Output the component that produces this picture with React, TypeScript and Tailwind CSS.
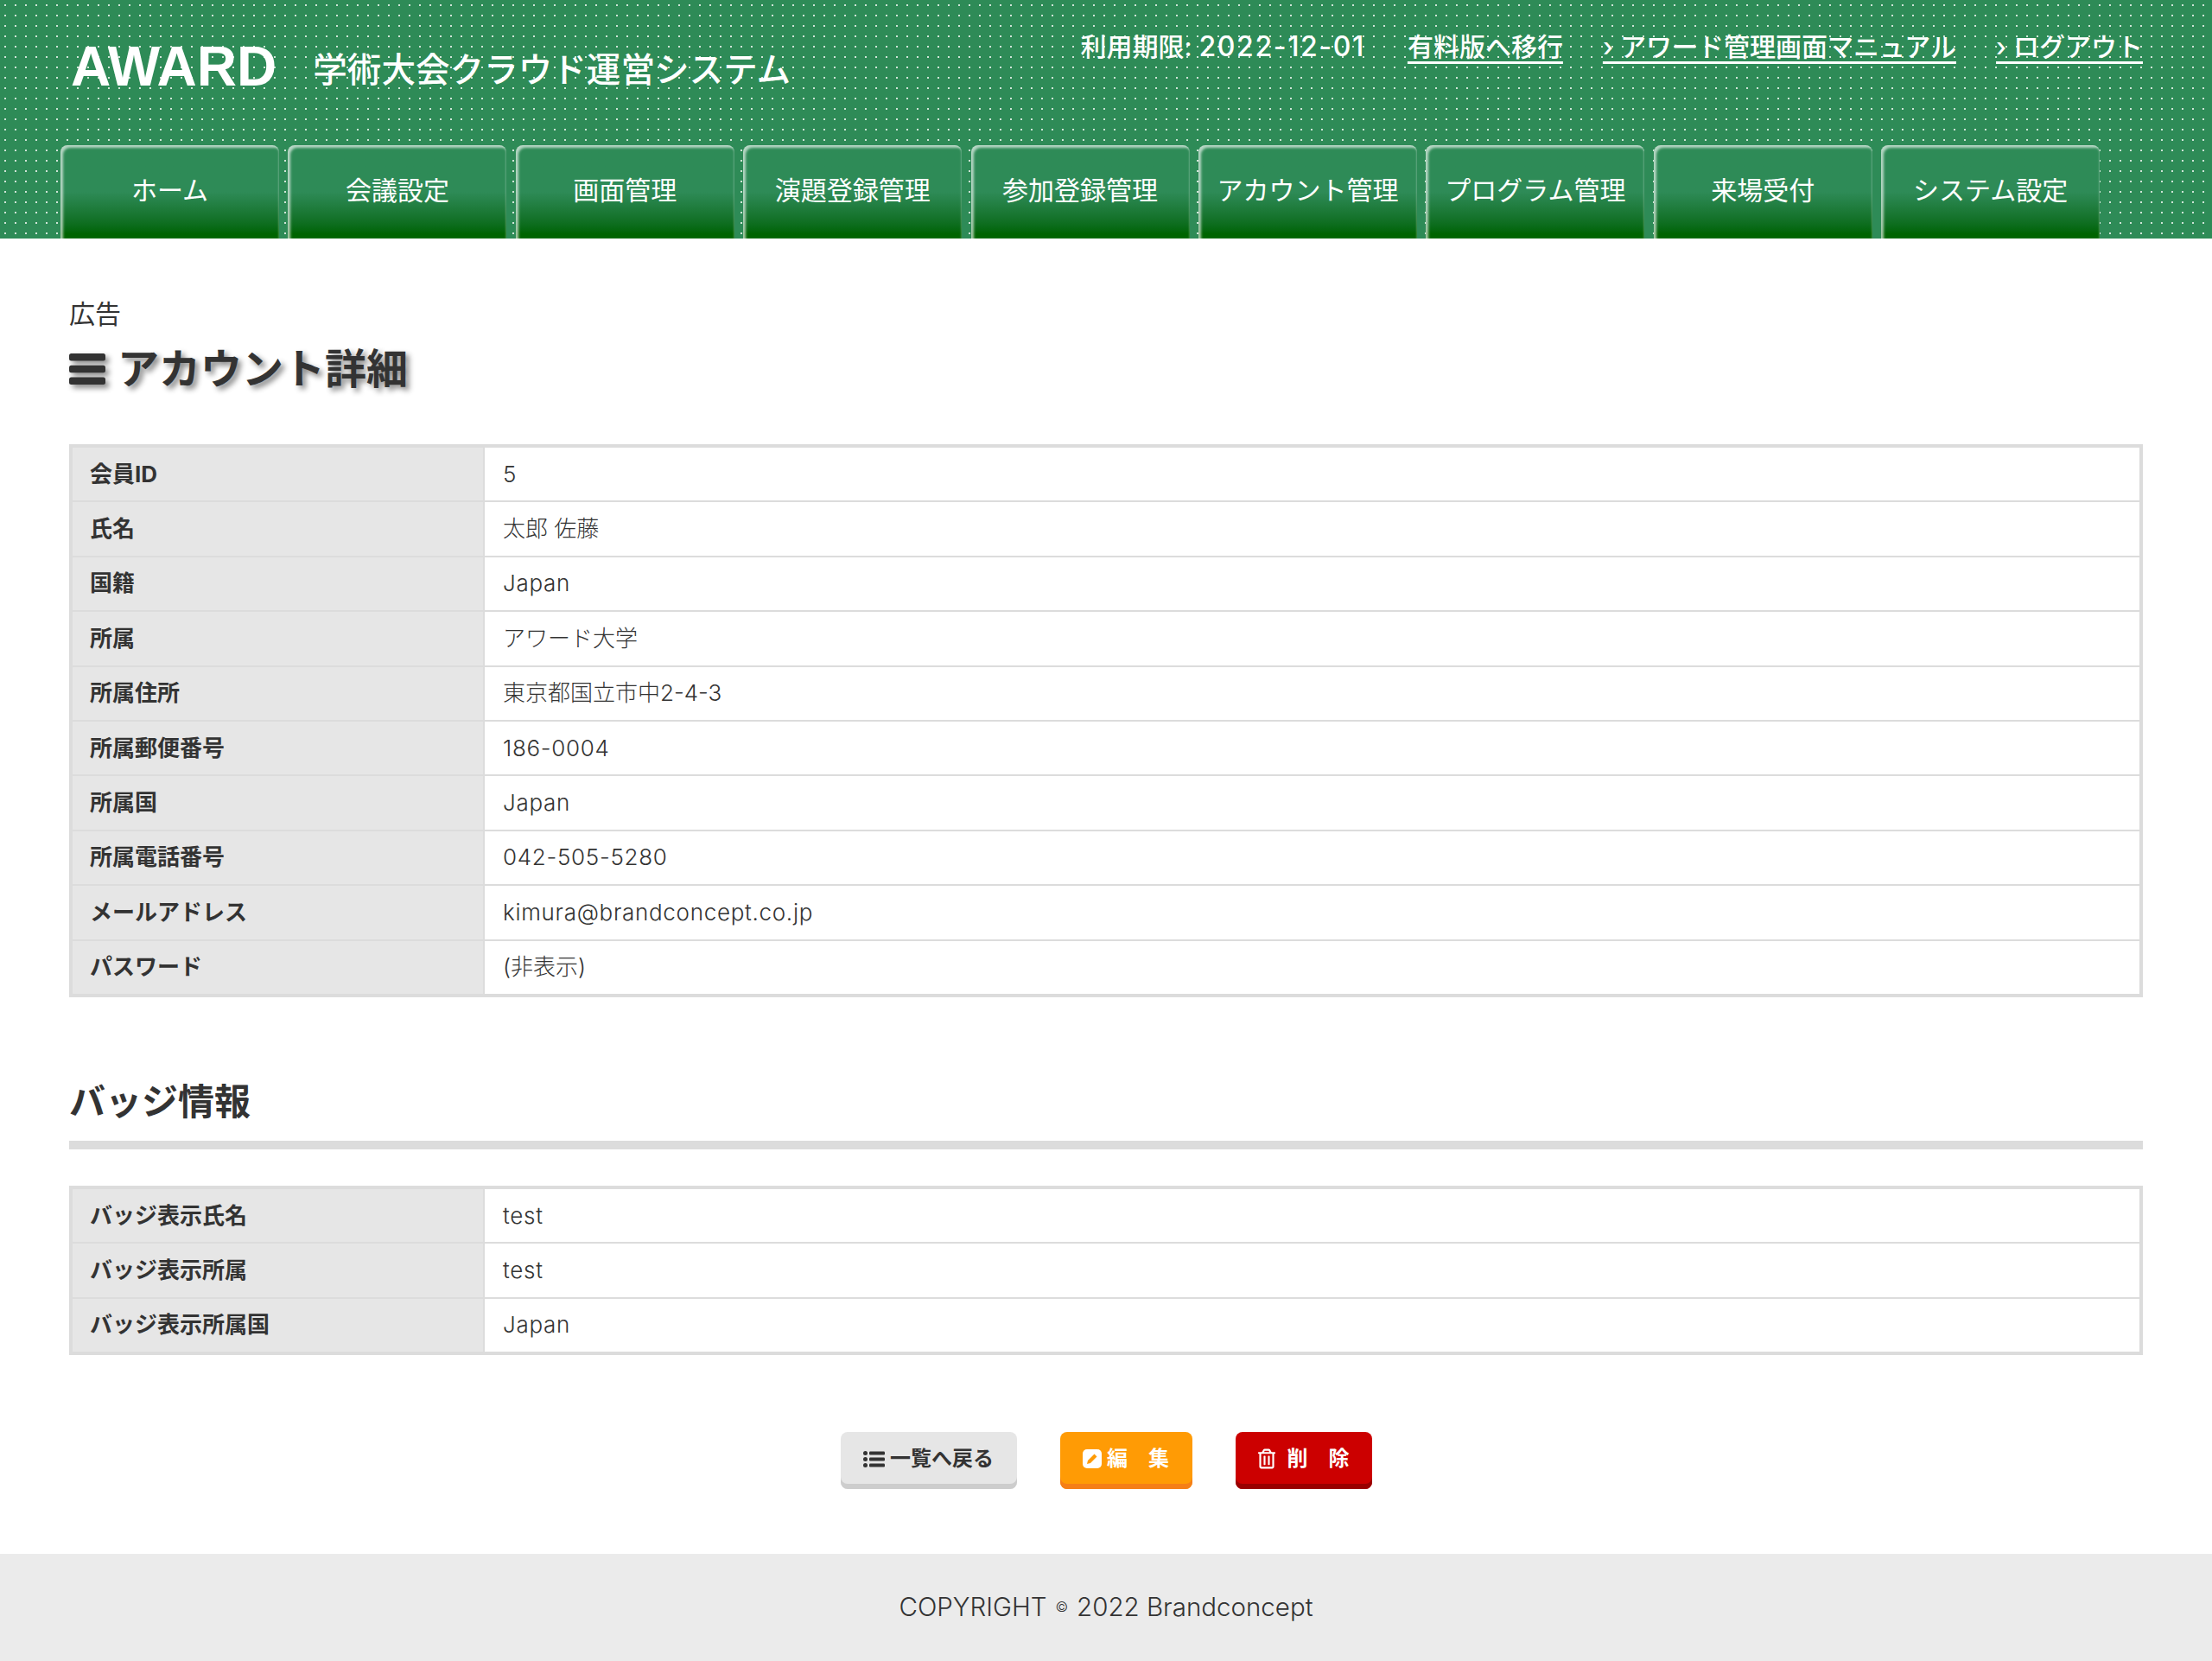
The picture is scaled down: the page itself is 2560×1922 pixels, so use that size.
import {FaRegTrashAlt} from 'react-icons/fa';

const navItems = [
  'ホーム',
  '会議設定',
  '画面管理',
  '演題登録管理',
  '参加登録管理',
  'アカウント管理',
  'プログラム管理',
  '来場受付',
  'システム設定',
];

const accountRows = [
  ['会員ID', '5'],
  ['氏名', '太郎 佐藤'],
  ['国籍', 'Japan'],
  ['所属', 'アワード大学'],
  ['所属住所', '東京都国立市中2-4-3'],
  ['所属郵便番号', '186-0004'],
  ['所属国', 'Japan'],
  ['所属電話番号', '042-505-5280'],
  ['メールアドレス', 'kimura@brandconcept.co.jp'],
  ['パスワード', '(非表示)'],
];

const badgeRows = [
  ['バッジ表示氏名', 'test'],
  ['バッジ表示所属', 'test'],
  ['バッジ表示所属国', 'Japan'],
];

function DetailTable({rows}: {rows: string[][]}) {
  return (
    <div className="border-4 border-[#dcdcdc] text-[26px] text-[#333]">
      {rows.map(([label, value], idx) => (
        <div
          key={label}
          className={`flex ${idx < rows.length - 1 ? 'h-[63.4px] border-b-2 border-[#dcdcdc]' : 'h-[61.4px]'}`}
        >
          <div className="w-[477px] flex items-center pl-[20px] pb-[1px] bg-[#e6e6e6] font-bold border-r-2 border-[#dcdcdc]">
            {label}
          </div>
          <div
            className={`flex-1 flex items-center pl-[21px] pb-[1px] font-light ${/^[\x00-\x7f]+$/.test(value) ? 'tracking-[0.7px]' : ''}`}
          >
            {value}
          </div>
        </div>
      ))}
    </div>
  );
}

function MenuIcon() {
  return (
    <svg viewBox="0 0 42 36" className="w-[42px] h-[36px] drop-shadow-[4px_4px_3px_#888]" fill="currentColor">
      <rect x="0" y="0" width="42" height="8.5" rx="2.5" />
      <rect x="0" y="13.75" width="42" height="8.5" rx="2.5" />
      <rect x="0" y="27.5" width="42" height="8.5" rx="2.5" />
    </svg>
  );
}

function ListIcon() {
  return (
    <svg viewBox="0 0 25 19" className="w-[25px] h-[19px]" fill="currentColor">
      <circle cx="2.5" cy="2.5" r="2.5" />
      <circle cx="2.5" cy="9.5" r="2.5" />
      <circle cx="2.5" cy="16.5" r="2.5" />
      <rect x="7" y="0.5" width="18" height="4" rx="1.2" />
      <rect x="7" y="7.5" width="18" height="4" rx="1.2" />
      <rect x="7" y="14.5" width="18" height="4" rx="1.2" />
    </svg>
  );
}

function EditIcon() {
  return (
    <svg viewBox="0 0 22 22" className="w-[22px] h-[22px]">
      <rect width="22" height="22" rx="5" fill="#fff" />
      <path d="M5 17l1-4 7.5-7.5 3 3L9 16z" fill="#ff9b05" />
    </svg>
  );
}

export default function App() {
  return (
    <div className="w-[2560px] min-h-[1922px] flex flex-col bg-white font-['Inter','Noto_Sans_CJK_JP',sans-serif] text-[#333]">
      {/* Header */}
      <header className="h-[276px] flex flex-col bg-[#2e8b57] bg-[radial-gradient(circle,#cfe4d7_1px,transparent_1.4px)] bg-[length:12px_12px]">
        <div className="flex justify-between pl-[82px] pr-[80px] text-white">
          <div className="flex items-start pt-[45px] gap-[42px]">
            <span className="font-['Liberation_Sans',sans-serif] text-[64px] leading-[64px] font-bold">
              AWARD
            </span>
            <span className="mt-[4px] text-[39.6px] leading-[64px] font-medium">
              学術大会クラウド運営システム
            </span>
          </div>
          <div className="flex pt-[32px] gap-[46px] text-[30px] leading-[44px] font-medium">
            <span className="mr-[3px]">
              利用期限: <span className="text-[32px] tracking-[1.6px]">2022-12-01</span>
            </span>
            <a className="underline decoration-[3px] underline-offset-[6px]">有料版へ移行</a>
            <a className="underline decoration-[3px] underline-offset-[6px]">› アワード管理画面マニュアル</a>
            <a className="underline decoration-[3px] underline-offset-[6px]">› ログアウト</a>
          </div>
        </div>
        <nav className="mt-auto flex gap-[10.4px] pl-[70px]">
          {navItems.map((item) => (
            <div
              key={item}
              className="w-[253px] h-[108px] flex items-center justify-center pb-[3px] rounded-t-[8px] text-[30px] text-white bg-gradient-to-b from-[#2e8b57] from-50% to-[#006400] to-95% shadow-[inset_3px_3px_3px_rgba(255,255,255,0.65),inset_-1px_0_2px_rgba(255,255,255,0.25)]"
            >
              {item}
            </div>
          ))}
        </nav>
      </header>

      {/* Main */}
      <main className="flex-1 px-[80px]">
        <p className="pt-[65px] text-[30px] leading-[44px]">広告</p>
        <h1 className="mt-[10px] flex items-center gap-[14px] text-[48px] leading-[64px] font-bold [text-shadow:4px_4px_6px_#888]">
          <MenuIcon />
          アカウント詳細
        </h1>
        <div className="mt-[55px]">
          <DetailTable rows={accountRows} />
        </div>

        <h2 className="mt-[90px] text-[42px] leading-[62px] font-bold">バッジ情報</h2>
        <div className="mt-[14px] h-[10px] bg-[#dcdcdc]" />
        <div className="mt-[42px]">
          <DetailTable rows={badgeRows} />
        </div>

        <div className="mt-[89px] flex justify-center gap-[50px] text-[24px] font-bold">
          <button className="h-[66px] w-[204px] flex items-center justify-center gap-[6px] pb-[4px] rounded-[8px] bg-[#e6e6e6] text-[#333] shadow-[inset_0_-6px_0_#cdcdcd]">
            <ListIcon />
            一覧へ戻る
          </button>
          <button className="h-[66px] w-[153px] flex items-center justify-center gap-[6px] pb-[4px] rounded-[8px] bg-[#ff9b05] text-white shadow-[inset_0_-6px_0_#f57f17]">
            <EditIcon />
            編　集
          </button>
          <button className="h-[66px] w-[158px] flex items-center justify-center gap-[14px] pb-[4px] rounded-[8px] bg-[#cc0000] text-white shadow-[inset_0_-6px_0_#990000]">
            <FaRegTrashAlt className="w-[20px] h-[24px]" />
            削　除
          </button>
        </div>
      </main>

      {/* Footer */}
      <footer className="mt-[75px] h-[124px] flex items-center justify-center pb-[2px] bg-[#ebebeb] text-[29.5px] font-light">
        COPYRIGHT <span className="mx-[10px] text-[16px]">©</span> 2022 Brandconcept
      </footer>
    </div>
  );
}
